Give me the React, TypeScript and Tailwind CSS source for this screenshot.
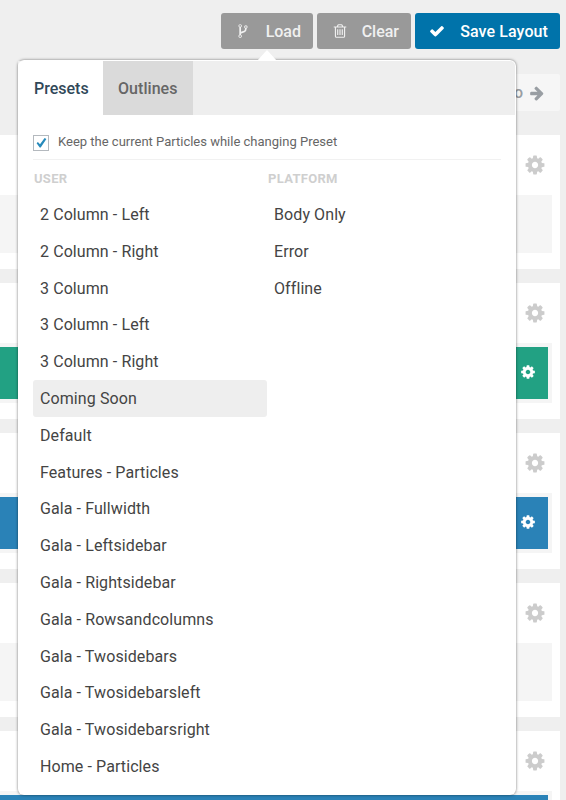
import React from "react";

const PATHS = {
  cog: "M1152 896q0-106-75-181t-181-75-181 75-75 181 75 181 181 75 181-75 75-181zm512-109v222q0 12-8 23t-20 13l-185 28q-19 54-39 91 35 50 107 138 10 12 10 25t-9 23q-27 37-99 108t-94 71q-12 0-26-9l-138-108q-44 23-91 38-16 136-29 186-7 28-36 28h-222q-14 0-24.5-8.5t-11.5-21.5l-28-184q-49-16-90-37l-141 107q-10 9-25 9-14 0-25-11-126-114-165-168-7-10-7-23 0-12 8-23 15-21 51-66.5t54-70.5q-27-50-41-99l-183-27q-13-2-21-12.5t-8-23.5v-222q0-12 8-23t19-13l186-28q14-46 39-92-40-57-107-138-10-12-10-24 0-10 9-23 26-36 98.5-107.5t94.5-71.5q13 0 26 10l138 107q44-23 91-38 16-136 29-186 7-28 36-28h222q14 0 24.5 8.5t11.5 21.5l28 184q49 16 90 37l142-107q9-9 24-9 13 0 25 10 129 119 165 170 7 8 7 22 0 12-8 23-15 21-51 66.5t-54 70.5q26 50 41 98l183 28q13 2 21 12.5t8 23.5z",
  check: "M1671 566q0 40-28 68l-724 724-136 136q-28 28-68 28t-68-28l-136-136-362-362q-28-28-28-68t28-68l136-136q28-28 68-28t68 28l294 295 656-657q28-28 68-28t68 28l136 136q28 28 28 68z",
  arrow: "M1600 960q0 54-37 91l-651 651q-39 37-91 37-51 0-90-37l-75-75q-38-38-38-91t38-91l293-293h-704q-52 0-84.5-37.5t-32.5-90.5v-128q0-53 32.5-90.5t84.5-37.5h704l-293-294q-38-36-38-90t38-90l75-75q38-38 90-38 53 0 91 38l651 651q37 35 37 90z",
  fork: "M672 1472q0-40-28-68t-68-28-68 28-28 68 28 68 68 28 68-28 28-68zm0-1152q0-40-28-68t-68-28-68 28-28 68 28 68 68 28 68-28 28-68zm640 128q0-40-28-68t-68-28-68 28-28 68 28 68 68 28 68-28 28-68zm96 0q0 52-26 96.5t-70 69.5q-2 287-226 414-68 38-203 81-128 40-169.5 71t-41.5 100v26q44 25 70 69.5t26 96.5q0 80-56 136t-136 56-136-56-56-136q0-52 26-96.5t70-69.5v-820q-44-25-70-69.5t-26-96.5q0-80 56-136t136-56 136 56 56 136q0 52-26 96.5t-70 69.5v497q54-26 154-57 55-17 87.5-29.5t70.5-31 59-39.5 40.5-51 28-69.5 8.5-91.5q-44-25-70-69.5t-26-96.5q0-80 56-136t136-56 136 56 56 136z",
  trash: "M704 736v576q0 14-9 23t-23 9h-64q-14 0-23-9t-9-23v-576q0-14 9-23t23-9h64q14 0 23 9t9 23zm256 0v576q0 14-9 23t-23 9h-64q-14 0-23-9t-9-23v-576q0-14 9-23t23-9h64q14 0 23 9t9 23zm256 0v576q0 14-9 23t-23 9h-64q-14 0-23-9t-9-23v-576q0-14 9-23t23-9h64q14 0 23 9t9 23zm128 724v-948h-896v948q0 22 7 40.5t14.5 27 10.5 8.5h832q3 0 10.5-8.5t14.5-27 7-40.5zm-672-1076h448l-48-117q-7-9-17-11h-317q-10 2-17 11zm928 32v64q0 14-9 23t-23 9h-96v948q0 83-47 143.5t-113 60.5h-832q-66 0-113-58.5t-47-141.5v-952h-96q-14 0-23-9t-9-23v-64q0-14 9-23t23-9h309l70-167q15-37 54-63t79-26h320q40 0 79 26t54 63l70 167h309q14 0 23 9t9 23z",
};

function Icon({ name, className }: { name: keyof typeof PATHS; className: string }) {
  return (
    <svg viewBox="0 0 1792 1792" fill="currentColor" className={`shrink-0 ${className}`}>
      <path d={PATHS[name]} />
    </svg>
  );
}

const userPresets = [
  "2 Column - Left",
  "2 Column - Right",
  "3 Column",
  "3 Column - Left",
  "3 Column - Right",
  "Coming Soon",
  "Default",
  "Features - Particles",
  "Gala - Fullwidth",
  "Gala - Leftsidebar",
  "Gala - Rightsidebar",
  "Gala - Rowsandcolumns",
  "Gala - Twosidebars",
  "Gala - Twosidebarsleft",
  "Gala - Twosidebarsright",
  "Home - Particles",
];
const platformPresets = ["Body Only", "Error", "Offline"];

function PresetColumn({ title, items, active }: { title: string; items: string[]; active?: string }) {
  return (
    <div className="w-[234px]">
      <h4 className="h-9 pt-px pl-px text-[13px] leading-[35px] font-bold tracking-[0.3px] text-[#cfcfcf]">{title}</h4>
      <ul>
        {items.map((item) => (
          <li
            key={item}
            className={`h-[36.8px] rounded-[3px] pl-[7px] text-base leading-[38.6px] tracking-[0.09px] whitespace-nowrap text-[#444] ${item === active ? "bg-[#eee]" : ""}`}
          >
            {item}
          </li>
        ))}
      </ul>
    </div>
  );
}

function EmptySection() {
  return (
    <section className="mb-3.5 h-[134px] shrink-0 bg-white pr-2">
      <div className="flex h-[60px] items-center justify-end pr-1.5">
        <Icon name="cog" className="size-[22px] text-[#ccc]" />
      </div>
      <div className="h-[58px] bg-[#f5f5f5]" />
    </section>
  );
}

function ParticleSection({ color }: { color: string }) {
  return (
    <section className="mb-3.5 h-[136px] shrink-0 bg-white pr-2">
      <div className="flex h-[60px] items-center justify-end pr-1.5">
        <Icon name="cog" className="size-[22px] text-[#ccc]" />
      </div>
      <div className="h-[60px] bg-[#f5f5f5] py-1 pr-1">
        <div className={`flex h-[52px] items-center justify-end pr-3 pb-[2px] text-white ${color}`}>
          <Icon name="cog" className="size-4" />
        </div>
      </div>
    </section>
  );
}

export default function App() {
  return (
    <div className="relative flex h-[800px] w-[566px] flex-col overflow-hidden bg-[#efefef] font-[Roboto,sans-serif]">
      <header className="flex h-[74px] shrink-0 items-start justify-end gap-1 pt-[13px] pr-1.5">
        <button className="flex h-9 w-[92px] items-center justify-between rounded-[3px] bg-[#999] pr-3 pl-3.5 text-base font-medium text-[#f0f0f0]">
          <Icon name="fork" className="size-4" />
          <span className="pt-[2px]">Load</span>
        </button>
        <button className="flex h-9 w-[94px] items-center justify-between rounded-[3px] bg-[#999] pr-3 pl-[15px] text-base font-medium text-[#f0f0f0]">
          <Icon name="trash" className="size-4" />
          <span className="pt-[2px]">Clear</span>
        </button>
        <button className="flex h-9 w-[145px] items-center justify-between rounded-[3px] bg-[#0073aa] pr-3 pl-3.5 text-base font-medium text-white">
          <Icon name="check" className="size-4" />
          <span className="pt-[2px] tracking-[0.1px]">Save Layout</span>
        </button>
      </header>

      <nav className="mr-1.5 mb-6 flex h-[37px] shrink-0 justify-end font-medium text-[#999ea3]">
        <button className="flex items-center gap-1.5 rounded-[2px] bg-[#f6f6f6] pr-[15px] pl-4">
          <span className="text-base">Redo</span>
          <Icon name="arrow" className="size-4" />
        </button>
      </nav>

      <main className="mr-1.5 flex min-h-0 flex-1 flex-col">
        <EmptySection />
        <ParticleSection color="bg-[#22a183]" />
        <ParticleSection color="bg-[#2a82b7]" />
        <EmptySection />
        <ParticleSection color="bg-[#2a82b7]" />
      </main>

      <div className="absolute top-[60px] left-[18px] h-[735px] w-[498px] rounded-md bg-white shadow-[0_0_3px_rgba(0,0,0,0.55)]">
        <svg viewBox="0 0 20 11" className="absolute -top-[10px] left-[239px] h-[11px] w-5">
          <path d="M0 11L10 0L20 11Z" fill="white" />
        </svg>
        <div className="mt-px mr-px flex h-[54px] rounded-tr-[5px] bg-[#eee] text-base leading-[56px] font-medium">
          <div className="w-[85px] rounded-tl-[5px] bg-white pl-4 text-[#314859]">Presets</div>
          <div className="w-[90px] bg-[#dadada] pl-[15px] tracking-[0.05px] text-[#666]">Outlines</div>
        </div>
        <div className="px-[15px]">
          <label className="mb-px flex h-[45px] items-center gap-[9px] border-b border-[#f1f1f1] pt-2.5 text-[13px] text-[#666]">
            <span className="mt-[2px] flex size-4 items-center justify-center border border-[#b4b9be] bg-white">
              <svg viewBox="0 0 16 16" className="size-4 shrink-0 text-[#278abb]">
                <path d="M3.6 8.2L4.9 6.9L7 9.2L11.6 2.9L13.4 3.9L7.7 12.6H6.7Z" fill="currentColor" />
              </svg>
            </span>
            Keep the current Particles while changing Preset
          </label>
          <div className="-mt-px flex">
            <PresetColumn title="USER" items={userPresets} active="Coming Soon" />
            <PresetColumn title="PLATFORM" items={platformPresets} />
          </div>
        </div>
      </div>
    </div>
  );
}
